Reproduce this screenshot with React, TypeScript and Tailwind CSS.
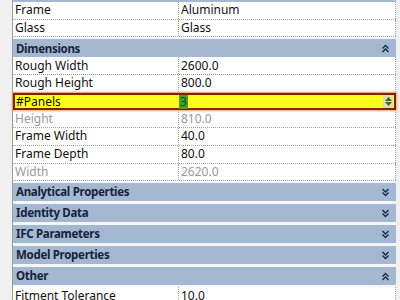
import React from "react";

const Chev = ({ up }: { up: boolean }) => (
  <svg width="9" height="9" viewBox="0 0 9 9" className="shrink-0">
    {up ? (
      <g fill="none" stroke="#1b2a45" strokeWidth="1.4">
        <path d="M1.5 4.5 L4.5 1.5 L7.5 4.5" />
        <path d="M1.5 8 L4.5 5 L7.5 8" />
      </g>
    ) : (
      <g fill="none" stroke="#1b2a45" strokeWidth="1.4">
        <path d="M1.5 1 L4.5 4 L7.5 1" />
        <path d="M1.5 4.5 L4.5 7.5 L7.5 4.5" />
      </g>
    )}
  </svg>
);

const Header = ({ title, up }: { title: string; up: boolean }) => (
  <div className="h-[18px] bg-[#a4b8d2] flex items-center justify-between pl-[3px] pr-[6px]">
    <span className="text-[11.5px] font-bold tracking-[-0.3px] text-[#16243d] leading-none">{title}</span>
    <Chev up={up} />
  </div>
);

const Row = ({ label, value, gray }: { label: string; value: string; gray?: boolean }) => (
  <div
    className={`h-[17.7px] flex border-b border-dotted border-[#a0a0a0] bg-white text-[12px] leading-none ${
      gray ? "text-[#9a9a9a]" : "text-[#111]"
    }`}
  >
    <div className="w-[166px] shrink-0 flex items-center pl-[2px] border-r border-dotted border-[#a0a0a0]">{label}</div>
    <div className="flex-1 flex items-center pl-[2px] border-r border-dotted border-[#a0a0a0]">{value}</div>
  </div>
);

export default function App() {
  return (
    <div className="w-[400px] h-[300px] bg-[#f0f0f0] overflow-hidden font-['Noto_Sans',sans-serif]">
      <div className="ml-[12px] w-[384px] border-l border-[#9a9a9a] bg-[#f4f6f9] flex flex-col">
        <div className="h-[2px] bg-[#a4b8d2]" />
        <Row label="Frame" value="Aluminum" />
        <Row label="Glass" value="Glass" />
        <div className="h-[2px]" />
        <Header title="Dimensions" up />
        <Row label="Rough Width" value="2600.0" />
        <Row label="Rough Height" value="800.0" />
        <div className="h-[17.7px] flex items-center bg-[#ffff1a] border-2 border-[#8a1e05] shadow-[0_0_2px_1px_#f2a35a] text-[12px] leading-none text-[#111] relative z-10">
          <div className="w-[164px] shrink-0 pl-[1px]">#Panels</div>
          <div className="flex-1 flex items-center justify-between pr-[1px]">
            <span className="bg-[#45a12a] text-[#1c4f0c] px-[1px] h-[14px] flex items-center">3</span>
            <div className="w-[10px] h-[13px] bg-[#d8e2a8] flex flex-col items-center justify-center gap-[1px]">
              <svg width="7" height="4" viewBox="0 0 7 4"><path d="M0 4 L3.5 0 L7 4 Z" fill="#505a40" /></svg>
              <svg width="7" height="4" viewBox="0 0 7 4"><path d="M0 0 L3.5 4 L7 0 Z" fill="#505a40" /></svg>
            </div>
          </div>
        </div>
        <Row label="Height" value="810.0" gray />
        <Row label="Frame Width" value="40.0" />
        <Row label="Frame Depth" value="80.0" />
        <Row label="Width" value="2620.0" gray />
        <div className="h-[2px]" />
        <div className="flex flex-col gap-[3px]">
          <Header title="Analytical Properties" up={false} />
          <Header title="Identity Data" up={false} />
          <Header title="IFC Parameters" up={false} />
          <Header title="Model Properties" up={false} />
          <Header title="Other" up />
        </div>
        <div className="h-[2px]" />
        <Row label="Fitment Tolerance" value="10.0" />
      </div>
    </div>
  );
}
